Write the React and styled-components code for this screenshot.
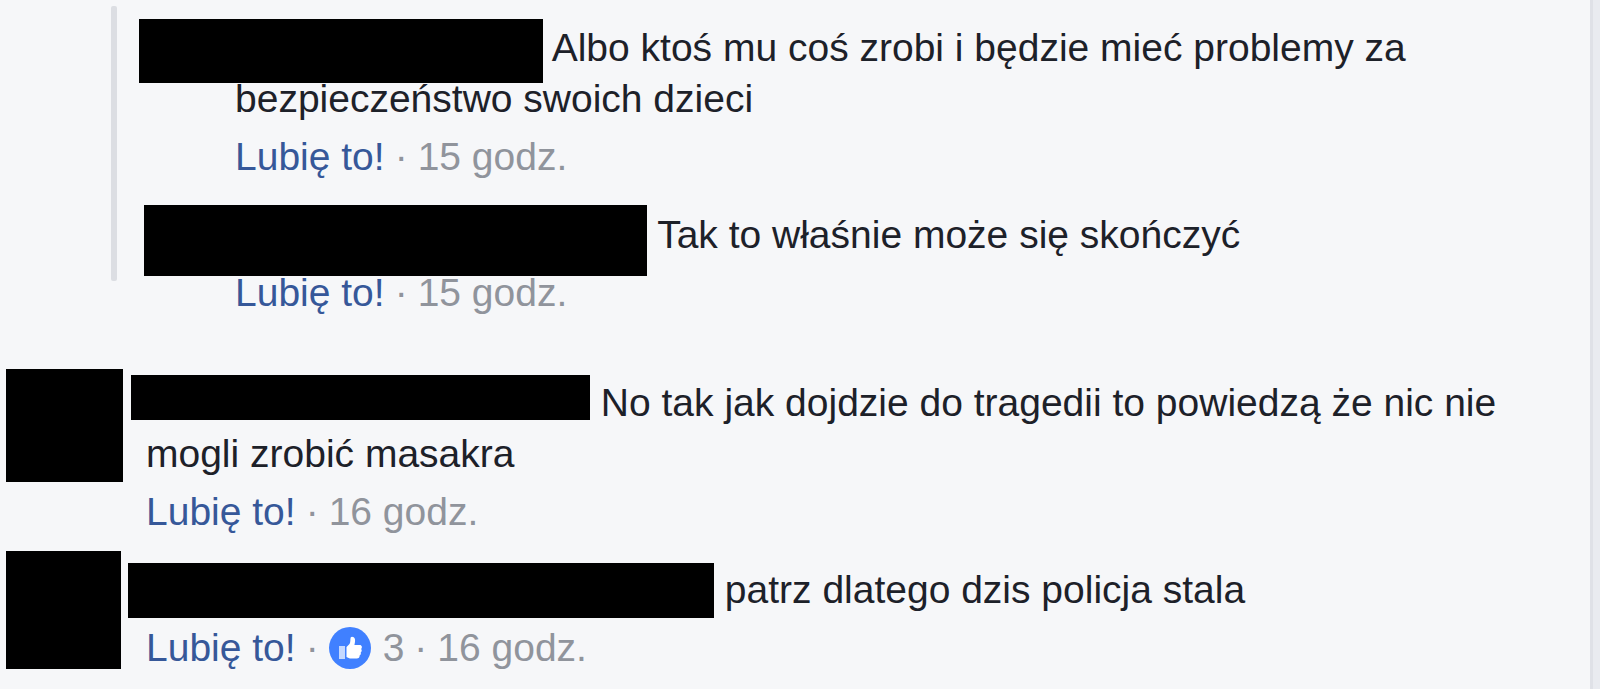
import React from 'react'
import styled, { createGlobalStyle } from 'styled-components'

const GlobalStyle = createGlobalStyle`
  body {
    margin: 0;
    background-color: #e9ebf0;
    font-family: 'Liberation Sans', Arial, sans-serif;
  }
`

const Panel = styled.main`
  box-sizing: border-box;
  min-height: 100vh;
  margin-right: 7px;
  padding: 6px 24px 12px 6px;
  border-right: 3px solid #dfe1e7;
  background-color: #f6f7f9;
  color: #1d2129;
  font-size: 39px;
  line-height: 51px;
`

const Replies = styled.section`
  display: flex;
  margin: 0 0 51px 105px;
`

const ThreadLine = styled.div`
  flex: none;
  width: 6px;
  margin-bottom: 37px;
  border-radius: 2px;
  background-color: #dcdee3;
`

const ReplyList = styled.div`
  flex: 1;
  display: flex;
  flex-direction: column;
  gap: 27px;
  padding: 16px 0 0 118px;
`

const CommentList = styled.section`
  display: flex;
  flex-direction: column;
  gap: 14px;
`

const CommentRow = styled.article`
  display: grid;
  grid-template-columns: 140px 1fr;
  align-items: start;
`

const Avatar = styled.div`
  width: ${props => props.$width}px;
  height: ${props => props.$height}px;
  background-color: #000;
`

const CommentBody = styled.div`
  padding-top: ${props => props.$top || 0}px;
`

const CommentText = styled.p`
  margin: 0;
`

const NameBar = styled.span`
  display: inline-block;
  position: relative;
  vertical-align: top;
  width: ${props => props.$width}px;
  height: ${props => props.$height}px;
  margin: -${props => props.$rise}px 0 -24px -${props => props.$outdent}px;
  background-color: #000;
`

const Meta = styled.div`
  display: flex;
  align-items: center;
  gap: 10px;
  margin-top: 7px;
  color: #90949c;
`

const LikeButton = styled.button`
  padding: 0;
  border: 0;
  background: none;
  color: #365899;
  font: inherit;
  cursor: pointer;
  &:hover {
    text-decoration: underline;
  }
`

const Likes = styled.span`
  display: flex;
  align-items: center;
  gap: 12px;
`

const LikeBadge = styled.svg`
  display: block;
  width: 42px;
  height: 42px;
`

const LikeIcon = () => (
  <LikeBadge viewBox='0 0 42 42' aria-hidden='true'>
    <circle cx='21' cy='21' r='21' fill='#4080ff' />
    <path d='M10 19h6v13h-6z' fill='#c4d8ff' />
    <path
      d='M17.500 20l3-3c1.300-1.700.6-4.500 1.200-6.500.8-1.500 3.600-.7 4.200 1.500.5 2-.2 4.500-.5 6h5.200c2.400 0 3 2.600 1.500 4 1 1 .8 2.800-.4 3.500.5 1.300 0 2.500-1.100 3 .2 1.800-1 3-2.800 3h-5.500c-2 0-3.400-.7-4.800-1.500z'
      fill='#fff'
    />
  </LikeBadge>
)

const CommentMeta = ({ time, likes }) => (
  <Meta>
    <LikeButton type='button'>Lubię to!</LikeButton>
    <span>·</span>
    {likes && (
      <>
        <Likes>
          <LikeIcon />
          {likes}
        </Likes>
        <span>·</span>
      </>
    )}
    <time>{time}</time>
  </Meta>
)

const Comment = ({ text, time, likes, bar, top }) => (
  <CommentBody $top={top}>
    <CommentText>
      <NameBar $width={bar.width} $height={bar.height} $rise={bar.rise} $outdent={bar.outdent} />
      {' '}{text}
    </CommentText>
    <CommentMeta time={time} likes={likes} />
  </CommentBody>
)

const replies = [
  {
    text: 'Albo ktoś mu coś zrobi i będzie mieć problemy za bezpieczeństwo swoich dzieci',
    time: '15 godz.',
    bar: { width: 404, height: 64, rise: 3, outdent: 96 }
  },
  {
    text: 'Tak to właśnie może się skończyć',
    time: '15 godz.',
    bar: { width: 503, height: 71, rise: 4, outdent: 91 }
  }
]

const comments = [
  {
    text: 'No tak jak dojdzie do tragedii to powiedzą że nic nie mogli zrobić masakra',
    time: '16 godz.',
    top: 8,
    avatar: { width: 117, height: 113 },
    bar: { width: 459, height: 45, rise: 2, outdent: 15 }
  },
  {
    text: 'patrz dlatego dzis policja stala',
    time: '16 godz.',
    likes: 3,
    top: 13,
    avatar: { width: 115, height: 118 },
    bar: { width: 586, height: 55, rise: 1, outdent: 18 }
  }
]

const App = () => {
  return (
    <>
      <GlobalStyle />
      <Panel>
        <Replies>
          <ThreadLine />
          <ReplyList>
            {replies.map(reply => <Comment key={reply.text} {...reply} />)}
          </ReplyList>
        </Replies>

        <CommentList>
          {comments.map(({ avatar, ...comment }) => (
            <CommentRow key={comment.text}>
              <Avatar $width={avatar.width} $height={avatar.height} />
              <Comment {...comment} />
            </CommentRow>
          ))}
        </CommentList>
      </Panel>
    </>
  )
}

export default App
